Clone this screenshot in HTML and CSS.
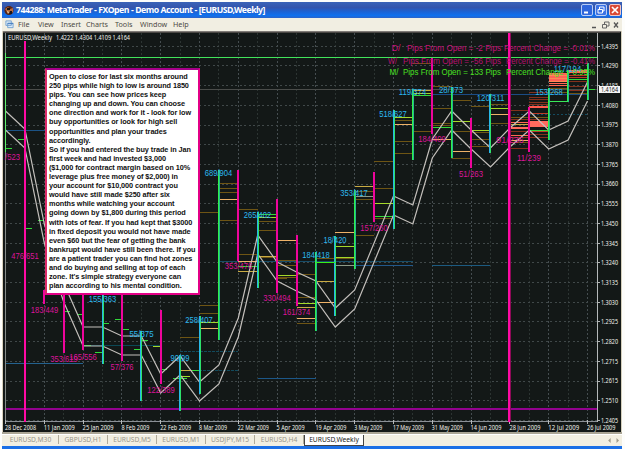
FILE: index.html
```html
<!DOCTYPE html>
<html lang="en">
<head>
<meta charset="utf-8">
<title>MetaTrader</title>
<link rel="stylesheet" href="styles.css">
</head>
<body>
<div class="window">
  <header class="titlebar">
    <svg class="logo" viewBox="0 0 10 11"><circle cx="5" cy="5.5" r="4.5" fill="#5b2414"/><path d="M1 4l3-2 2 2 3-1v4l-3 2-3-2z" fill="#b86a3c"/><path d="M3 3h3v2H3zM6 6h2v3H5z" fill="#1a1418"/><path d="M3 6l2 1-1 2z" fill="#f0d8b0"/></svg>
    <h1>744288: MetaTrader - FXOpen - Demo Account - [EURUSD,Weekly]</h1>
    <div class="controls">
      <svg viewBox="0 0 12 12"><rect x=".5" y=".5" width="11" height="11" rx="1.5" fill="#2f66dc" stroke="#b9cdf5"/><path d="M3 8.5h4" stroke="#fff" stroke-width="2"/></svg>
      <svg viewBox="0 0 12 12"><rect x=".5" y=".5" width="11" height="11" rx="1.5" fill="#3b72e4" stroke="#b9cdf5"/><path d="M4.5 5V3H9v4H7.500M3 5.500h4.500v3.500H3z" fill="none" stroke="#fff"/></svg>
      <svg viewBox="0 0 12 12"><rect x=".5" y=".5" width="11" height="11" rx="1.5" fill="#d94a37" stroke="#f0c8c8"/><path d="M3 3l6 6M9 3l-6 6" stroke="#fff" stroke-width="1.7"/></svg>
    </div>
  </header>
  <nav class="menubar">
    <svg class="docicon" viewBox="0 0 10 10"><path d="M1 1h6v5H1zM3 3.500h6v5H3z" fill="#dceaf8" stroke="#6f9fd0"/><path d="M3 4h6" stroke="#3f78bd"/></svg>
    <span class="file">File</span><span class="view">View</span><span class="insert">Insert</span><span class="charts">Charts</span><span class="tools">Tools</span><span class="win">Window</span><span class="help">Help</span>
    <svg class="mdi" viewBox="0 0 30 10"><path d="M2 7.500h4" stroke="#555" stroke-width="1.500"/><path d="M14.500 4V2H19v4h-2M12.500 4.500h4v3.500h-4z" fill="none" stroke="#666"/><path d="M24 2.500l4 5M28 2.500l-4 5" stroke="#555" stroke-width="1.300"/></svg>
  </nav>
  <main class="chart">
    <svg id="plot" viewBox="2 31 620 403" width="620" height="403"></svg>
    <aside class="note">Open to close for last six months around<br>250 pips while high to low is around 1850<br>pips. You can see how prices keep<br>changing up and down. You can choose<br>one direction and work for it - look for low<br>buy opportunities or look for high sell<br>opportunities and plan your trades<br>accordingly.<br>So if you had entered the buy trade in Jan<br>first week and had invested $3,000<br>($1,000 for contract margin based on 10%<br>leverage plus free money of $2,000) in<br>your account for $10,000 contract you<br>would have still made $250 after six<br>months while watching your account<br>going down by $1,800 during this period<br>with lots of fear. If you had kept that $3000<br>in fixed deposit you would not have made<br>even $60 but the fear of getting the bank<br>bankrupt would have still been there. If you<br>are a patient trader you can find hot zones<br>and do buying and selling at top of each<br>zone. It's simple strategy everyone can<br>plan according to his mental condition.</aside>
  </main>
  <footer class="tabs">
    <span>EURUSD,M30</span><span>GBPUSD,H1</span><span>EURUSD,M5</span><span>EURUSD,M1</span><span>USDJPY,M15</span><span>EURUSD,H4</span><span class="active">EURUSD,Weekly</span>
    <svg class="arrows" viewBox="0 0 16 6"><path d="M4 0v6L1 3zM11 0v6l3-3z" fill="#a09c8c"/></svg>
  </footer>
</div>
<script src="chart.js"></script>
</body>
</html>
```
FILE: styles.css
```css
* { box-sizing: border-box; }
body { margin: 0; width: 625px; height: 449px; overflow: hidden; background: #fdfdfb; font-family: "Liberation Sans", Arial, sans-serif; }
.window { margin: 2px 3px 0 2px; height: 447px; display: flex; flex-direction: column; background: #1b6fe6; }
.titlebar { flex: 0 0 16px; display: flex; align-items: center; padding: 0 1px 0 2px; background: linear-gradient(#3a63b8 0, #3355ad 35%, #1b63d6 62%, #0f70ee 85%, #2c63c8 100%); }
.logo { width: 10px; height: 11px; }
h1 { margin: 0 0 0 2px; font: bold 8.700px/16px "Noto Sans", sans-serif; letter-spacing: -0.5px; word-spacing: 0.2px; color: #fff; white-space: nowrap; }
.controls { margin-left: auto; display: flex; gap: 2px; }
.controls svg { width: 12px; height: 12px; }
.menubar { flex: 0 0 13px; display: flex; align-items: center; padding: 0 2px 0 3px; background: #f1eee2; font: 7.200px/13px "Noto Sans", sans-serif; color: #4d4a44; white-space: nowrap; }
.docicon { width: 9px; height: 9px; margin-right: 4px; }
.file { width: 20px; } .view { width: 23px; } .insert { width: 25px; } .charts { width: 29px; }
.tools { width: 25px; } .win { width: 33px; }
.mdi { width: 30px; height: 10px; margin-left: auto; }
.chart { flex: 0 0 403px; position: relative; background: #131817; }
#plot { display: block; font-family: "Noto Sans", sans-serif; }
.note { position: absolute; left: 43px; top: 37px; width: 155px; height: 227px; padding: 2px 0 0 2px; border: 2px solid #e30087; border-top-color: #a60089; border-left-color: #dc2a68; background: #fff; color: #111; font: bold 7.300px/9.090px "Liberation Sans", Arial, sans-serif; letter-spacing: -0.08px; white-space: nowrap; }
.tabs { flex: 0 0 12px; display: flex; align-items: flex-start; background: #f2efe2; border-top: 1px solid #fff; padding-left: 1px; font: 6.700px/11px "Noto Sans", sans-serif; color: #99968b; white-space: nowrap; }
.tabs span { width: 49px; text-align: center; border-right: 1px solid #b0ab9b; height: 9px; line-height: 9px; }
.tabs span:first-child { width: 56px; }
.tabs .active { width: 60px; height: 11px; line-height: 10px; background: #fff; border: 1px solid #444; border-top: 0; color: #222; }
.arrows { width: 16px; height: 5px; margin: 3px 0 0 auto; }
```
FILE: chart.js
```js
const plot = document.getElementById('plot');
const NS = 'http://www.w3.org/2000/svg';
const add = (tag, attrs, text) => {
  const el = document.createElementNS(NS, tag);
  for (const k in attrs) el.setAttribute(k, attrs[k]);
  if (text) el.textContent = text;
  plot.appendChild(el);
};
const X = k => 5.5 + 19.4 * k;
const line = (x1, y1, x2, y2, stroke, w = 1, dash) =>
  add('line', { x1, y1, x2, y2, stroke, 'stroke-width': w, ...(dash ? { 'stroke-dasharray': dash } : {}), ...(x1 === x2 || y1 === y2 ? { 'shape-rendering': 'crispEdges' } : {}) });
const label = (x, y, text, fill, size, w, anchor = 'start') =>
  add('text', { x, y, fill, 'font-size': size, 'text-anchor': anchor, textLength: w, lengthAdjust: 'spacingAndGlyphs' }, text);

// Frame edges
line(2, 31.5, 622, 31.5, '#807b77', 1);
line(3, 32.5, 620, 32.5, '#4a4744', 1);
line(2.5, 31, 2.5, 434, '#d8d0bc', 1);
line(621.5, 31, 621.5, 434, '#d5d0bd', 1);
line(2, 433, 622, 433, '#aaa595', 2);

// Grid
for (let k = 1; k < 31; k++) line(X(k), 33, X(k), 421, k % 2 ? '#2c3432' : '#454d50', 1, '2 2');
const prices = ['1.4395', '1.4290', '1.4185', '1.4080', '1.3975', '1.3870', '1.3765', '1.3660', '1.3555', '1.3450', '1.3345', '1.3240', '1.3135', '1.3030', '1.2925', '1.2820', '1.2715', '1.2615', '1.2510', '1.2405'];
prices.forEach((p, i) => {
  const y = 46.3 + 19.69 * i;
  line(6, y, 597, y, '#404849', 1, '2 2 2 3');
  line(597, y, 600, y, '#b0b4b4');
  label(601, y + 2.3, p, '#f0f0ea', 6.6, 17);
});
line(5.5, 33, 5.5, 421, '#858b89');
line(5, 421.5, 598, 421.5, '#8b9096');
line(597.5, 33, 597.5, 422, '#b5b9ba');
['28 Dec 2008', '11 Jan 2009', '25 Jan 2009', '8 Feb 2009', '22 Feb 2009', '8 Mar 2009', '22 Mar 2009', '5 Apr 2009', '19 Apr 2009', '3 May 2009', '17 May 2009', '31 May 2009', '14 Jun 2009', '28 Jun 2009', '12 Jul 2009', '26 Jul 2009'].forEach((d, i) => {
  line(X(2 * i), 420, X(2 * i), 424, '#b5b9ba');
  label(X(2 * i) - 0.5, 430, d, '#f0f0ea', 6.6, i === 15 ? 28.5 : d.length > 10 ? 31 : 28);
});

// Long horizontal levels
line(6, 89.5, 597, 89.5, '#4a4c4a');
line(6, 130.5, 45, 130.5, '#1b5284');
line(6, 363.5, 83, 363.5, '#24628f');
line(83, 345.500, 161, 345.500, '#0c4855');
line(180, 351.5, 238, 351.5, '#124a5c', 1, '3 1');
line(199, 370.5, 238, 370.5, '#124a5c', 1, '3 1');
line(258, 378.5, 316, 378.5, '#1c5788');
line(219, 261.5, 413, 261.5, '#164c68');
line(335, 265.5, 413, 265.5, '#22588a');
line(432, 265.5, 490, 265.5, '#1c5a80');
line(432, 94.5, 587, 94.5, '#1b4c84');
line(509, 114.5, 587, 114.5, '#144c60', 1, '2 2');

// Short support and resistance levels: column, width in columns, y, colour key
const tone = { b: '#6e5514', y: '#c9ab43', o: '#efb268', g: '#32d83a', l: '#a5d82a', w: '#8d9a89', r: '#82301c', s: '#ff6752' };
[
  [9,1,337.5,'b'],[9,1,370.5,'y'],[9,.5,376.5,'l'],[10,1,305.5,'b'],[10,1,313.5,'b'],[10,1,322.5,'l'],[10,1,328.5,'o'],
  [10,1,212.5,'b'],[11,1,183.5,'b'],[11,1,188.5,'b'],[11,1,192.5,'b'],[11,1,199.500,'o'],[11,1,220.5,'b'],
  [12,1,209.5,'b'],[12,1,254.5,'b'],[12,1,261.5,'o'],[12,1,266.5,'g'],[12,1,271.5,'y'],
  [13,1,214.5,'g'],[13,1,217.5,'l'],[13,1,221.5,'b'],[13,1,230.5,'b'],[13,1,256.5,'y'],[13,1,257.5,'b'],
  [14,1,240.5,'o'],[14,1,260.5,'b'],[14,1,265.5,'b'],[14,1,275.5,'l'],[14,1,277.5,'b'],[14,.5,278.5,'b'],
  [15,1,274.500,'b'],[15,1,297.5,'b'],[15,1,303.5,'l'],[15,1,307.5,'y'],[15,1,318.5,'o'],[15,1,323.5,'b'],
  [16,1,258.5,'b'],[16,1,262.5,'g'],[16,1,281.5,'y'],[16,1,302.5,'o'],[17,1,232.5,'o'],[17,1,246.5,'l'],[17,1,257.5,'l'],[17,1,258.500,'b'],[17,1,265.5,'w'],
  [18,1,186.5,'y'],[18,1,191.5,'b'],[18,1,196.5,'w'],[18,1,199.5,'b'],[18,1,235.5,'b'],[19,1,161.5,'b'],[19,1,188.5,'b'],[19,1,203.5,'l'],[19,1,216.5,'g'],[19,1,218.5,'b'],
  [20,1,117.5,'l'],[20,1,120.5,'b'],[20,1,124.5,'o'],[20,1,141.5,'b'],[20,1,153.5,'b'],[21,1,90.5,'y'],[21,1,93.5,'l'],[21,1,95.5,'g'],[21,1,131.5,'b'],[21,1,63.5,'b'],
  [22,1,86.5,'b'],[22,1,108.5,'b'],[22,1,123.5,'b'],[22,1,125.5,'b'],[22,1,127.500,'g'],[22,1,139.5,'o'],
  [23,1,100.5,'b'],[23,1,121.5,'l'],[23,1,131.5,'b'],[23,1,151.5,'o'],[23,1,158.5,'b'],
  [24,1,106.5,'b'],[24,1,130.5,'l'],[24,1,132.5,'b'],[24,1,139.5,'b'],[24,1,146.5,'b'],
  [25,1,104.5,'b'],[25,1,108.5,'l'],[25,1,114.5,'o'],[25,1,123.5,'b'],
  [26,1,110.5,'r'],[26,1,117.5,'b'],[26,1,119.5,'r'],[26,1,122.500,'s'],[26,1,124.5,'y'],[26,1,128.5,'g'],[26,1,131.5,'r'],[26,1,135.500,'s'],[26,1,137.5,'r'],[26,1,140.500,'o'],[26,1,142.5,'b'],[26,1,148.5,'r'],
  [27,1,92.5,'r'],[27,1,97.5,'r'],[27,1,99.5,'r'],[27,1,102.5,'r'],[27,1,104.5,'r'],[27,1,117.5,'b'],[27,1,119.5,'r'],[27,1,130.5,'g'],[27,1,134.5,'r'],[27,1,137.5,'r'],
  [28,1,83.5,'s'],[28,1,85.5,'s'],[28,1,88.5,'b'],[28,1,92.5,'b'],[28,1,101.5,'g'],
  [29,1,81.5,'r'],[29,1,86.5,'r'],[29,1,90.5,'r'],[29,1,93.5,'b'],[29,1,79.5,'g'],
  [0,.35,148.5,'g'],[.65,.35,139.5,'g'],[1,.35,228.5,'g'],[1.7,.3,220.5,'g'],[3,.35,311.5,'g'],[3.7,.3,314.5,'g'],[5,.35,323.5,'g'],[5.650,.35,319.5,'g'],[6,.35,329.5,'g'],[4,.4,345.5,'g'],[4.6,.4,352.5,'g'],[6.6,.4,349.5,'g'],[7,.35,340.5,'g'],[7.6,.4,346.5,'l'],[8,.35,369.5,'g'],[8.65,.7,378.5,'g'],[9.6,.4,370.5,'g'],[30,.4,89.5,'g']
].forEach(([k, n, y, t]) => line(X(k), y, X(k + n), y, tone[t]));

// Hot zones
const zone = (k, y, h, fill) => add('rect', { x: X(k), y, width: 19.4, height: h, fill, 'shape-rendering': 'crispEdges' });
zone(28, 73, 9, '#ff6257');
zone(29, 70, 3, '#ff6257');
zone(27, 121, 6, '#ff6b5e');
zone(27, 106, 2, '#ff5b4c');
zone(26, 127, 2, '#ff6b5e');
[113, 131].forEach(y => line(X(27), y + .5, X(28), y + .5, '#bd3b25'));
[75, 78, 81].forEach(y => line(X(28), y + .5, X(29), y + .5, '#fa8a55'));
[75, 77].forEach(y => line(X(29), y + .5, X(30), y + .5, '#b43a22'));

// Current price and horizontal markers
add('rect', { x: 5, y: 57, width: 592, height: 1, fill: '#42e45b' });
add('rect', { x: 6, y: 408, width: 591, height: 2, fill: '#93028f' });

// Moving band
const mid = [111,129,224,283,327,327,336,336,374,356,382,365,318,235,262,272,281,308,290,243,196,205,139,111,130,148,128,111,130,121,82];
[0, 19].forEach(dy => add('polyline', { points: mid.map((y, k) => `${X(k)},${y + dy}`).join(' '), fill: 'none', stroke: '#c4c0bc', 'stroke-width': 1.2 }));

// Weekly high-low bars
[
  ['g',0,53,152],['p',2,290,304],['p',3,290,353],['p',4,290,350],['c',5,290,364],['p',6,290,361],['c',7,331,401],['p',8,310,384],['c',9,355,411],['c',10,316,394],
  ['g',11,170,340],['p',12,170,261],['c',13,212,288],['p',14,199,293],['p',15,235,306],['g',16,252,331],['c',17,236,316],['g',18,190,269],['p',19,172,222],['c',20,110,229],
  ['g',21,89,160],['p',22,58,134],['g',23,87,158],['p',24,118,168],['c',25,94,153],['p',27,107,152],['g',28,88,140],['g',29,70,102],['g',30,63,100]
].forEach(([c, k, a, b]) => {
  const x = Math.round(X(k)), h = b - a;
  const bar = (bx, width, fill) => add('rect', { x: bx, y: a, width, height: h, fill });
  if (c === 'p') bar(x - 1, 2, '#ee059c');
  else if (k === 0) bar(5, 1, '#5fef6b');
  else {
    bar(x - 1, 1, c === 'g' ? '#2ff04a' : '#28b8e8');
    bar(x, 1, c === 'g' ? '#25b890' : '#2ee06a');
  }
});
line(X(28), 101.5, X(29), 101.5, '#38e858');
line(X(16), 262.5, X(17), 262.5, '#38f018');
add('rect', { x: 24, y: 41, width: 2, height: 381, fill: '#ff0aa4' });
add('rect', { x: 508, y: 33, width: 2, height: 389, fill: '#ff0aa4' });
add('rect', { x: 510, y: 33, width: 1, height: 389, fill: '#8e0a58' });

// Pip counts: open-close / high-low
const P = '#dc1499', C = '#2cb8f0';
[
  [8,160,'/523',P,5,15],[25,259,'476/651',P],[44.500,313,'183/449',P],[64,362,'353/619',P],[83,360,'165/556',P],[102.500,302,'155/363',C],[122,370,'57/376',P,0,23],[141.5,337,'55/375',C,0,24],
  [161,393,'122/389',P],[180,361,'90/99',C,0,19],[199,323,'258/407',C],[218.500,175.5,'689/904',C],[238.500,269,'353/476',P],[257.500,218,'265/402',C],[277,301,'330/494',P],[296.500,314.5,'161/374',P],
  [316,258,'184/418',C],[335,243,'18/420',C,0,23],[354,196,'353/417',C],[374,230.5,'157/260',P],[393,117,'518/627',C],[412.500,95,'119/374',C],[432,142,'184/409',P],[451,93,'28/373',C,0,24],[471,177,'51/263',P,0,24],
  [490.5,101,'120/311',C],[510,143,'91/236',P],[529,161,'11/239',P,0,24],[549,95,'153/268',C],[567.500,71.500,'117/194',C]
].forEach(([x, y, t, c, left, w]) => add('text', { x: left || x, y, fill: c, 'font-size': 8.3, 'font-family': 'Liberation Sans', 'text-anchor': left ? 'start' : 'middle', textLength: w || 27.5, lengthAdjust: 'spacingAndGlyphs' }, t));

// Period summary
[['D/', 51, '-2', '-0.01%', '#c80f78', 391.5], ['W/', 63.5, '-56', '-0.41%', '#b80f70', 388], ['M/', 75, '133', '0.95%', '#4ae022', 389.500]].forEach(([p, y, n, pc, c, x]) => {
  const s = (px, t, w) => add('text', { x: px, y, fill: c, 'font-size': 8.2, 'font-family': 'Liberation Sans', textLength: w, lengthAdjust: 'spacingAndGlyphs' }, t);
  const o = p === 'D/' ? 4 : 0;
  s(x, p, 9);
  s(403 + o, 'Pips From Open = ' + n + ' Pips', 98 - o);
  s(504 + (o ? 0 : 2), 'Percent Change = ' + pc, o ? 91 : 89);
});

label(8, 40, 'EURUSD,Weekly', '#f0f0ec', 6.800, 44);
label(56, 40, '1.4222 1.4304 1.4109 1.4164', '#f0f0ec', 6.800, 74);
add('rect', { x: 599, y: 86, width: 21, height: 7, fill: '#f4f4f4' });
label(601, 92, '1.4164', '#222', 6.600, 17);
```
